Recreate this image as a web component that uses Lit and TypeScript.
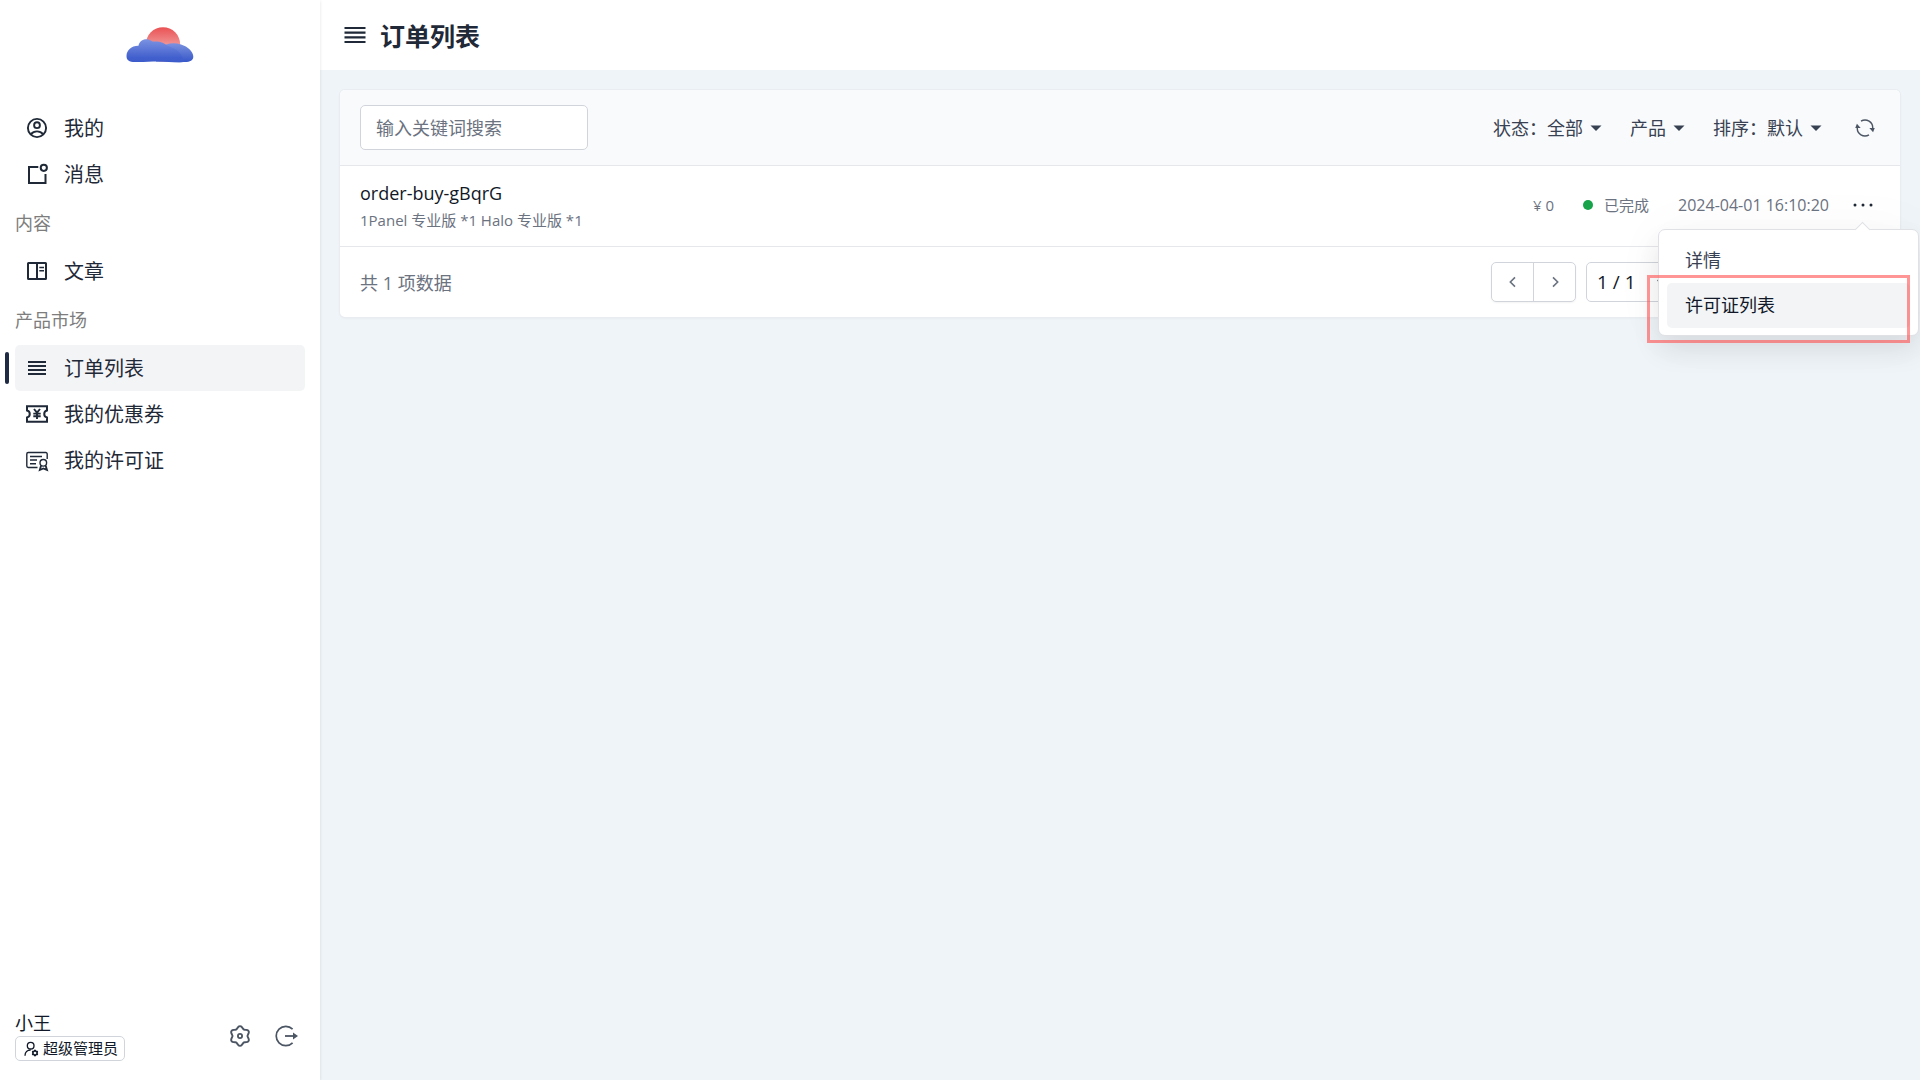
import { LitElement, html, css, svg, type TemplateResult, type SVGTemplateResult } from "lit";
import { customElement, state } from "lit/decorators.js";

const lobed = (cx: number, cy: number, r: number, depth: number): string => {
  const points: string[] = [];
  for (let i = 0; i < 72; i++) {
    const a = (i / 72) * Math.PI * 2;
    const radius = r + depth * Math.cos(6 * a);
    points.push(`${(cx + radius * Math.sin(a)).toFixed(2)} ${(cy - radius * Math.cos(a)).toFixed(2)}`);
  }
  return `M${points.join("L")}Z`;
};

const glyphs: Record<string, SVGTemplateResult> = {
  account: svg`<g stroke-width="1.9"><circle cx="12" cy="12" r="9.1"/><circle cx="12" cy="9.2" r="2.9"/><path d="M5.8 18.3C7.3 16.5 9.5 15.4 12 15.4s4.700 1.100 6.200 2.900"/></g>`,
  message: svg`<path stroke-width="2" d="M13.300 5H4v16h16.500V12"/><circle cx="18.800" cy="5.800" r="3.100" stroke-width="2"/>`,
  article: svg`<g stroke-width="2"><rect x="3" y="4" width="18" height="16" rx="0.500"/><path d="M12 4v16"/><path stroke-width="1.600" d="M14.300 8.500H19M14.300 11.700H19"/></g>`,
  list: svg`<path stroke-width="1.900" d="M3 6h18M3 10h18M3 14h18M3 18h18"/>`,
  coupon: svg`<path stroke-width="2" d="M2 4.300h20v4.200a3.600 3.600 0 0 0 0 7v4.200H2v-4.200a3.600 3.600 0 0 0 0-7z"/><path stroke-width="1.900" d="M9 7l3 3.700L15 7M12 10.500V17M8.300 11.600h7.400M8.300 14.300h7.400"/>`,
  license: svg`<g stroke-width="1.400"><path d="M12.500 19.500H3.200A1.400 1.400 0 0 1 1.800 18.100V5.900A1.400 1.400 0 0 1 3.200 4.500H20.800A1.400 1.400 0 0 1 22.200 5.900V11"/><path d="M5 8.500h12M5 12h7M5 15.700h6"/><circle cx="18.300" cy="14.800" r="3.300"/><path stroke-width="1.800" d="M16 17.800L14.800 22l3.500-1.500L22 22l-1.300-4.200"/></g>`,
  gear: svg`<path stroke-width="1.900" stroke-linejoin="round" d=${lobed(12, 12, 8.7, 1.2)}/><circle cx="12" cy="12" r="2.100" stroke-width="1.800"/>`,
  logout: svg`<path stroke-width="1.700" d="M18.600 5.200A9.600 9.600 0 1 0 18.600 18.800"/><path stroke-width="1.800" d="M11 12h9"/><path class="solid" d="M19 8.400L24 12l-5 3.600z"/>`,
  refresh: svg`<path stroke-width="1.700" d="M7.200 3.800A9.200 9.200 0 0 1 21.200 12.500M16.800 20.200A9.200 9.200 0 0 1 2.800 11.500"/><path class="solid" d="M17.200 12h6.500l-2 5zM6.800 12H.3l2-5z"/>`,
  admin: svg`<circle cx="11.500" cy="7" r="5" stroke-width="2"/><path stroke-width="2" d="M3 22c0-5 3.500-8.500 8.500-8.500"/><path stroke-width="2.200" d=${lobed(18, 18, 3.4, 0.6)}/>`,
  dots: svg`<g class="solid"><circle cx="4" cy="12" r="1.500"/><circle cx="12" cy="12" r="1.500"/><circle cx="20" cy="12" r="1.500"/></g>`,
  prev: svg`<path stroke-width="2.400" d="M15 5l-7 7 7 7"/>`,
  next: svg`<path stroke-width="2.400" d="M9 5l7 7-7 7"/>`,
  caret: svg`<path class="solid" d="M1 7h22L12 18z"/>`,
  chevron: svg`<path stroke-width="3" d="M3 8l9 9 9-9"/>`,
};

const icon = (name: string, size: string): TemplateResult =>
  html`<svg class="icon ${size}" viewBox="0 0 24 24" aria-hidden="true">${glyphs[name]}</svg>`;

interface NavItem { icon: string; label: string; }
interface NavGroup { title?: string; items: NavItem[]; }
interface Order { name: string; products: string; price: string; status: string; time: string; }

const groups: NavGroup[] = [
  { items: [{ icon: "account", label: "我的" }, { icon: "message", label: "消息" }] },
  { title: "内容", items: [{ icon: "article", label: "文章" }] },
  {
    title: "产品市场",
    items: [
      { icon: "list", label: "订单列表" },
      { icon: "coupon", label: "我的优惠券" },
      { icon: "license", label: "我的许可证" },
    ],
  },
];

const orders: Order[] = [
  { name: "order-buy-gBqrG", products: "1Panel 专业版 *1 Halo 专业版 *1", price: "¥ 0", status: "已完成", time: "2024-04-01 16:10:20" },
];

const shared = css`
  * { box-sizing: border-box; }
  button, input, select { font: inherit; color: inherit; margin: 0; }
  button { border: 0; padding: 0; background: none; cursor: pointer; }
  a { color: inherit; text-decoration: none; }
  ul { list-style: none; margin: 0; padding: 0; }
  .icon { display: block; flex: none; fill: none; stroke: currentColor; }
  .icon .solid { fill: currentColor; stroke: none; }
  .s12 { width: 12px; height: 12px; }
  .s16 { width: 16px; height: 16px; }
  .s20 { width: 20px; height: 20px; }
  .s24 { width: 24px; height: 24px; }
`;

@customElement("side-bar")
class SideBar extends LitElement {
  @state() private current = "订单列表";

  static styles = [shared, css`
    :host { display: flex; flex-direction: column; flex: none; width: 320px; background: #fff; box-shadow: 0 1px 3px rgba(0, 0, 0, 0.12); z-index: 1; color: #1f2937; }
    .brand { display: flex; justify-content: center; padding: 26px 0 42px; }
    .logo { display: block; width: 68px; height: 37px; }
    .nav { flex: 1; padding: 0 15px; }
    .title { margin: 0; padding-top: 2px; font-size: 18px; font-weight: 400; line-height: 49px; color: #7d7d7d; }
    .item { display: flex; align-items: center; gap: 15px; height: 46px; padding: 0 10px; border-radius: 5px; font-size: 20px; position: relative; }
    .item span { padding-bottom: 2px; }
    .item.active { background: #f3f4f6; }
    .item.active::before { content: ""; position: absolute; left: -10px; top: 7px; bottom: 7px; width: 4px; border-radius: 2px; background: #1f2a44; }
    .user { display: flex; align-items: center; gap: 22px; padding: 0 22px 19px 15px; color: #4b5563; }
    .who { flex: 1; display: flex; flex-direction: column; align-items: flex-start; color: #111827; }
    .name { font-size: 18px; line-height: 26px; }
    .role { display: flex; align-items: center; gap: 4px; height: 25px; padding: 0 6px 0 7px; border: 1px solid #d1d5db; border-radius: 5px; font-size: 15px; line-height: 23px; }
  `];

  render() {
    return html`
      <a class="brand" href="#" aria-label="首页">
        <svg class="logo" viewBox="0 0 68 37" aria-hidden="true">
          <defs>
            <linearGradient id="sun" x1="0" y1="0" x2="0" y2="1"><stop offset="0" stop-color="#ea5254"/><stop offset="0.600" stop-color="#f2a0a0"/></linearGradient>
            <linearGradient id="back" x1="0" y1="0" x2="0" y2="1"><stop offset="0" stop-color="#7b92df"/><stop offset="1" stop-color="#3757c9"/></linearGradient>
            <linearGradient id="front" x1="0" y1="0" x2="0" y2="1"><stop offset="0" stop-color="#7b93e2"/><stop offset="0.800" stop-color="#4260cd"/><stop offset="1" stop-color="#3c5bcb"/></linearGradient>
          </defs>
          <circle cx="37" cy="18.500" r="17.200" fill="url(#sun)"/>
          <path fill="url(#back)" d="M34 22C40 17 48 16 55 18.500C62 20.500 67.300 26 67.300 30.500C67.300 34.500 64 36 59 36C50 36.500 38 35.500 30 35.500Z"/>
          <path fill="url(#front)" d="M.500 30C.500 24 6 19.500 12.500 19.800C13 15.500 17 12.800 21 13.200C23.500 13.500 25 14.500 26.500 15.500C35 15 38 17 42 20C50 22 57 28 58 36C50 36.800 42 35.500 32 35.500C24 35.500 17 36.300 9 36C3 36 .500 34 .500 30Z"/>
        </svg>
      </a>
      <nav class="nav">
        ${groups.map((g) => html`
          ${g.title ? html`<h2 class="title">${g.title}</h2>` : ""}
          <ul>
            ${g.items.map((i) => html`<li>
              <a class="item ${i.label === this.current ? "active" : ""}" href="#" @click=${() => (this.current = i.label)}>${icon(i.icon, "s24")}<span>${i.label}</span></a>
            </li>`)}
          </ul>`)}
      </nav>
      <div class="user">
        <div class="who">
          <span class="name">小王</span>
          <span class="role">${icon("admin", "s16")}<span>超级管理员</span></span>
        </div>
        <button aria-label="设置">${icon("gear", "s24")}</button>
        <button aria-label="退出">${icon("logout", "s24")}</button>
      </div>`;
  }
}

@customElement("order-list")
class OrderList extends LitElement {
  @state() private open = true;

  static styles = [shared, css`
    :host { display: block; border-radius: 5px; background: #fff; box-shadow: 0 0 0 1px #e9ecf0, 0 1px 3px rgba(0, 0, 0, 0.06); }
    .tools { display: flex; align-items: center; justify-content: space-between; padding: 15px 20px; background: #f9fafc; border-radius: 5px 5px 0 0; border-bottom: 1px solid #e5e7eb; }
    .search { width: 228px; height: 45px; padding: 0 15px; border: 1px solid #d1d5db; border-radius: 5px; background: #fff; font-size: 18px; outline: none; }
    .search::placeholder { color: #6b7280; opacity: 1; }
    .filters { display: flex; align-items: center; gap: 28px; font-size: 18px; line-height: 26px; color: #374151; }
    .filter { display: flex; align-items: center; }
    .filter select { appearance: none; border: 0; padding: 0; background: none; outline: none; }
    .filter .icon { margin-left: 7px; }
    .round { display: grid; place-items: center; width: 30px; height: 30px; color: #4b5563; }
    .row { display: flex; align-items: center; justify-content: space-between; height: 81px; padding: 0 20px; border-bottom: 1px solid #e5e7eb; }
    .name { margin: 0; font-size: 18px; font-weight: 400; line-height: 28px; color: #111827; }
    .products { margin: 0; font-size: 15px; line-height: 26px; color: #6b7280; }
    .facts { display: flex; align-items: center; gap: 29px; padding-bottom: 2px; font-size: 15px; line-height: 20px; color: #6b7280; }
    .facts time { font-size: 16px; }
    .status { display: flex; align-items: center; gap: 11px; }
    .dot { width: 10px; height: 10px; border-radius: 5px; background: #16a34a; }
    .more { position: relative; margin-left: -12px; }
    .trigger { display: grid; place-items: center; width: 34px; height: 30px; color: #1f2937; }
    .menu { position: absolute; z-index: 2; top: 39px; right: -39px; width: 261px; padding: 8px 8px 7px; border: 1px solid #dfe1e5; border-radius: 7px; background: #fff; box-shadow: 0 14px 28px rgba(0, 0, 0, 0.09), 0 0 60px rgba(0, 0, 0, 0.03); font-size: 18px; color: #374151; }
    .menu::before { content: ""; position: absolute; top: -6px; right: 50px; width: 10px; height: 10px; border: 1px solid #dfe1e5; border-width: 1px 0 0 1px; background: #fff; transform: rotate(45deg); }
    .entry { position: relative; }
    .entry button { display: block; width: 100%; height: 45px; padding: 0 18px 2px; border-radius: 5px; text-align: left; }
    .entry.hot button { background: #f3f4f6; color: #111827; }
    .mark { position: absolute; inset: -8px 0 -15px -20px; border: 3px solid rgba(255, 78, 78, 0.6); pointer-events: none; }
    .foot { display: flex; align-items: center; justify-content: space-between; padding: 15px 20px; font-size: 18px; color: #6b7280; }
    .pager { display: flex; gap: 10px; width: 389px; }
    .steps { display: flex; border: 1px solid #d1d5db; border-radius: 5px; box-shadow: 0 1px 2px rgba(0, 0, 0, 0.05); }
    .steps button { display: grid; place-items: center; width: 41px; height: 38px; }
    .steps button + button { width: 42px; border-left: 1px solid #d1d5db; }
    .page { position: relative; display: flex; align-items: center; }
    .page select { appearance: none; width: 94px; height: 40px; padding: 0 10px; border: 1px solid #d1d5db; border-radius: 5px; background: #fff; color: #111827; font-size: 19px; }
    .page .icon { position: absolute; right: 12px; }
  `];

  render() {
    return html`
      <div class="tools">
        <input class="search" type="text" placeholder="输入关键词搜索" aria-label="输入关键词搜索" />
        <div class="filters">
          <label class="filter">状态：<select><option>全部</option></select>${icon("caret", "s12")}</label>
          <label class="filter"><select aria-label="产品"><option>产品</option></select>${icon("caret", "s12")}</label>
          <label class="filter">排序：<select><option>默认</option></select>${icon("caret", "s12")}</label>
          <button class="round" aria-label="刷新">${icon("refresh", "s20")}</button>
        </div>
      </div>
      ${orders.map((o) => html`
        <div class="row">
          <div>
            <h2 class="name">${o.name}</h2>
            <p class="products">${o.products}</p>
          </div>
          <div class="facts">
            <span>${o.price}</span>
            <span class="status"><span class="dot"></span>${o.status}</span>
            <time>${o.time}</time>
            <div class="more">
              <button class="trigger" aria-label="更多" aria-expanded=${this.open} @click=${() => (this.open = !this.open)}>${icon("dots", "s24")}</button>
              ${this.open ? html`
                <ul class="menu">
                  <li class="entry"><button>详情</button></li>
                  <li class="entry hot"><button>许可证列表</button><span class="mark"></span></li>
                </ul>` : ""}
            </div>
          </div>
        </div>`)}
      <div class="foot">
        <span>共 ${orders.length} 项数据</span>
        <div class="pager">
          <div class="steps">
            <button aria-label="上一页">${icon("prev", "s16")}</button>
            <button aria-label="下一页">${icon("next", "s16")}</button>
          </div>
          <label class="page"><select aria-label="页码"><option>1 / 1</option></select>${icon("chevron", "s12")}</label>
        </div>
      </div>`;
  }
}

@customElement("app-root")
class AppRoot extends LitElement {
  static styles = [shared, css`
    :host { display: flex; min-height: 100vh; overflow: hidden; background: #eff4f9; font-family: "Open Sans", "Noto Sans CJK SC", sans-serif; }
    .main { flex: 1; min-width: 0; }
    .head { display: flex; align-items: center; gap: 11px; height: 70px; padding: 0 21px; background: #fff; color: #1f2937; }
    .head h1 { margin: 0; padding-top: 2px; font-size: 25px; line-height: 36px; font-weight: 700; }
    .head .icon { width: 28px; height: 28px; }
    .body { padding: 20px; }
  `];

  render() {
    return html`
      <side-bar></side-bar>
      <main class="main">
        <header class="head">${icon("list", "s24")}<h1>订单列表</h1></header>
        <div class="body"><order-list></order-list></div>
      </main>`;
  }
}
